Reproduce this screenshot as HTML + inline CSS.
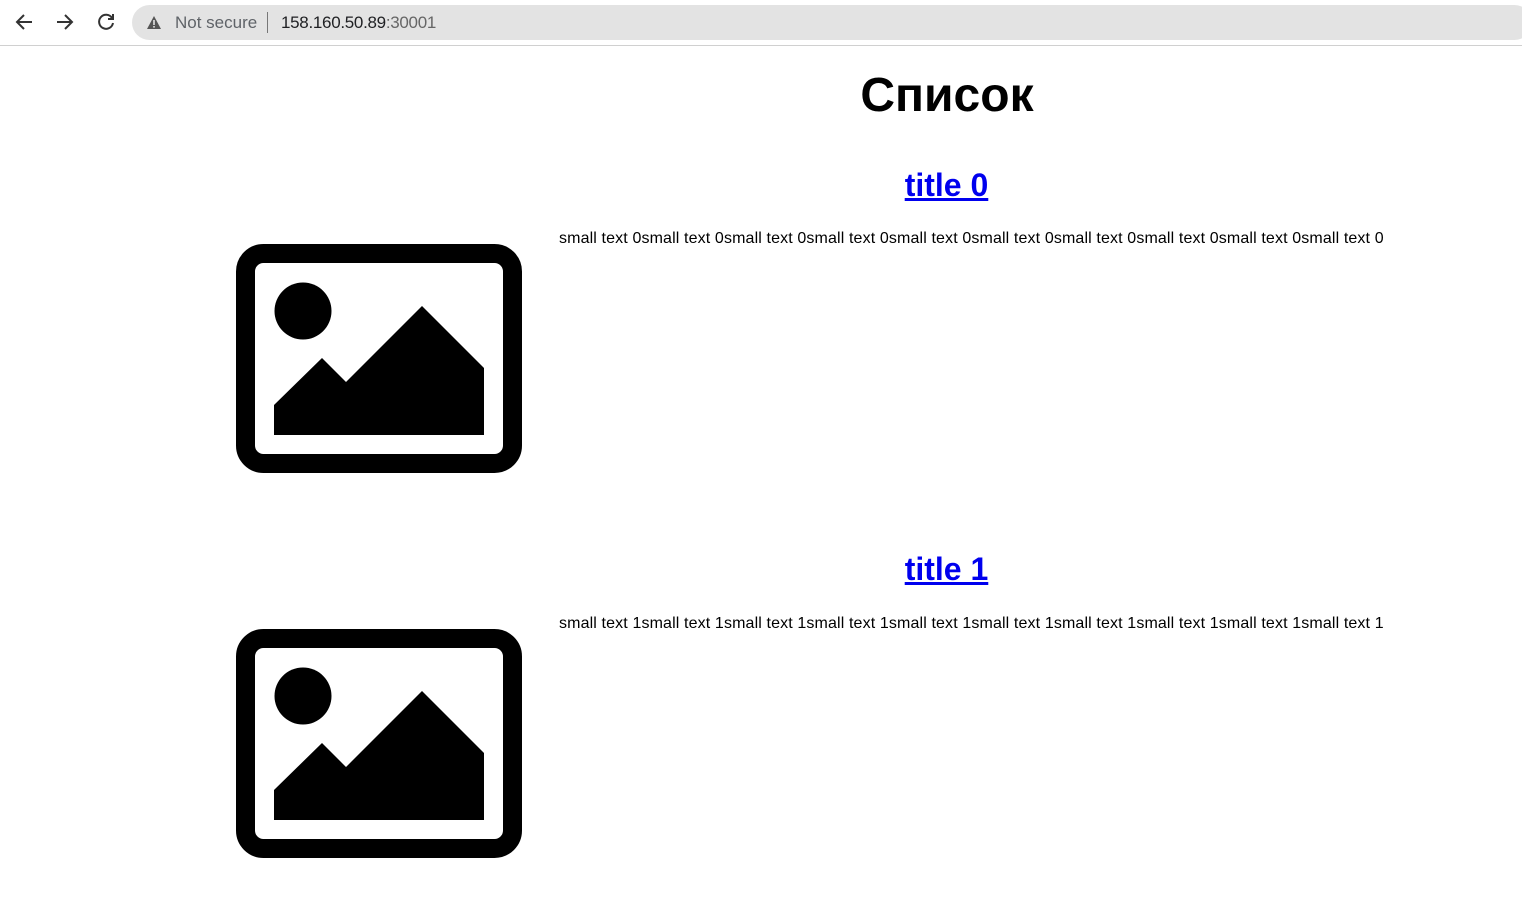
<!DOCTYPE html>
<html><head><meta charset="utf-8"><style>
body{margin:0;width:1522px;height:910px;position:relative;background:#fff;font-family:"Liberation Sans",Arial,sans-serif;overflow:hidden}
.a{position:absolute;white-space:nowrap}
</style></head><body>
<div class="a" style="left:0;top:0;width:1522px;height:45px;background:#fff;border-bottom:1px solid #d0d0d0"></div>
<svg class="a" style="left:0;top:0" width="130" height="45">
<g fill="none" stroke="#333" stroke-width="2">
<path d="M32 22H17M24 15l-7 7 7 7"/>
<path d="M57 22h15M65 15l7 7-7 7"/>
<path d="M112 18a7 7 0 1 0 1 5"/><path d="M113 14v5h-5"/>
</g></svg>
<div class="a" style="left:132px;top:5px;width:1400px;height:35px;border-radius:18px;background:#e3e3e3"></div>
<svg class="a" style="left:146px;top:15px" width="16" height="16"><path d="M8 1L15 14H1Z" fill="#555"/><rect x="7.2" y="5" width="1.6" height="5" fill="#e3e3e3"/><rect x="7.2" y="11" width="1.6" height="1.6" fill="#e3e3e3"/></svg>
<div class="a" style="left:175px;top:13px;font-size:17px;color:#5f6368">Not secure</div>
<div class="a" style="left:267px;top:12px;width:1px;height:21px;background:#777"></div>
<div class="a" style="left:281px;top:13px;font-size:17px;color:#202124;letter-spacing:-0.3px">158.160.50.89<span style="color:#666">:30001</span></div>

<div class="a" style="left:0;width:1894px;top:68px;text-align:center;font-size:48px;font-weight:bold">Список</div>

<div class="a" style="left:0;width:1893px;top:167px;text-align:center;font-size:32px;font-weight:bold"><a style="color:#0000ee;text-decoration:underline">title 0</a></div>
<div class="a" style="left:559px;top:230px;font-size:16px;letter-spacing:0.13px">small text 0small text 0small text 0small text 0small text 0small text 0small text 0small text 0small text 0small text 0</div>
<svg class="a" style="left:236px;top:244px" width="287" height="230" viewBox="236 244 287 230">
<rect x="245.5" y="253.5" width="267" height="210" rx="18" fill="none" stroke="#000" stroke-width="19"/>
<circle cx="303" cy="311" r="28.5"/>
<path d="M274 435V405L322 358L346 382L422 306L484 368V435Z"/>
</svg>

<div class="a" style="left:0;width:1893px;top:551px;text-align:center;font-size:32px;font-weight:bold"><a style="color:#0000ee;text-decoration:underline">title 1</a></div>
<div class="a" style="left:559px;top:615px;font-size:16px;letter-spacing:0.13px">small text 1small text 1small text 1small text 1small text 1small text 1small text 1small text 1small text 1small text 1</div>
<svg class="a" style="left:236px;top:629px" width="287" height="230" viewBox="236 244 287 230">
<rect x="245.5" y="253.5" width="267" height="210" rx="18" fill="none" stroke="#000" stroke-width="19"/>
<circle cx="303" cy="311" r="28.5"/>
<path d="M274 435V405L322 358L346 382L422 306L484 368V435Z"/>
</svg>
</body></html>
